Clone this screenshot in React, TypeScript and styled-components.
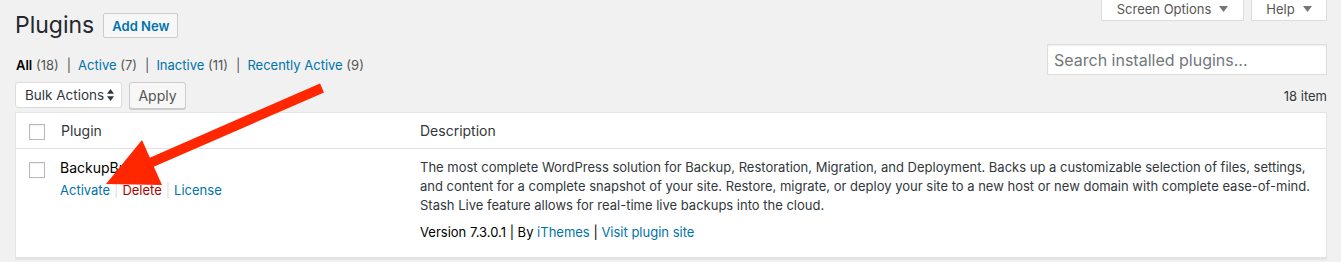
import React from "react";
import styled, { createGlobalStyle } from "styled-components";

const GlobalStyle = createGlobalStyle`
  html, body {
    margin: 0;
    padding: 0;
    background: #f1f1f1;
  }
  body {
    font-family: Inter, "Liberation Sans", Arial, sans-serif;
    font-size: 13px;
    color: #23282d;
  }
  * { box-sizing: border-box; }
`;

const filters = [
  { label: "All", count: 18, current: true },
  { label: "Active", count: 7 },
  { label: "Inactive", count: 11 },
  { label: "Recently Active", count: 9 },
];

const Triangle = () => (
  <svg width="9" height="6" viewBox="0 0 9 6">
    <path d="M0 0h9L4.5 6z" fill="#72777c" />
  </svg>
);

const SortArrows = () => (
  <svg width="7" height="12" viewBox="0 0 7 12">
    <path d="M3.5 0L7 4.8H0z M3.5 12L7 7.2H0z" fill="#32373c" />
  </svg>
);

const App = () => {
  return (
    <Page>
      <GlobalStyle />
      <TopBar>
        <TitleGroup>
          <Title>Plugins</Title>
          <AddNew>Add New</AddNew>
        </TitleGroup>
        <Tabs>
          <ScreenTab $width={143}>
            Screen Options <Triangle />
          </ScreenTab>
          <ScreenTab $width={76}>
            Help <Triangle />
          </ScreenTab>
        </Tabs>
      </TopBar>

      <FilterRow>
        <Filters>
          {filters.map((f, i) => (
            <li key={f.label}>
              {f.current ? <strong>{f.label}</strong> : <FilterLink>{f.label}</FilterLink>}
              <Count> ({f.count})</Count>
              {i < filters.length - 1 && <Sep>|</Sep>}
            </li>
          ))}
        </Filters>
        <Search placeholder="Search installed plugins..." />
      </FilterRow>

      <NavRow>
        <Actions>
          <Select>
            Bulk Actions <SortArrows />
          </Select>
          <Button>Apply</Button>
        </Actions>
        <ItemCount>18 item</ItemCount>
      </NavRow>

      <Table>
        <HeadRow>
          <CheckCell $top={11}>
            <Checkbox />
          </CheckCell>
          <HeadCell>Plugin</HeadCell>
          <HeadCell>Description</HeadCell>
        </HeadRow>
        <BodyRow>
          <CheckCell $top={13}>
            <Checkbox />
          </CheckCell>
          <TitleCell>
            <PluginName>BackupBuddy</PluginName>
            <RowActions>
              <ActionLink>Activate</ActionLink>
              <ActionSep>|</ActionSep>
              <ActionLink $danger>Delete</ActionLink>
              <ActionSep>|</ActionSep>
              <ActionLink>License</ActionLink>
            </RowActions>
          </TitleCell>
          <DescCell>
            <DescText>
              The most complete WordPress solution for Backup, Restoration, Migration, and Deployment. Backs up a customizable selection of files, settings,
              <br />
              and content for a complete snapshot of your site. Restore, migrate, or deploy your site to a new host or new domain with complete ease-of-mind.
              <br />
              Stash Live feature allows for real-time live backups into the cloud.
            </DescText>
            <Meta>
              Version 7.3.0.1 | By <MetaLink>iThemes</MetaLink> | <MetaLink>Visit plugin site</MetaLink>
            </Meta>
          </DescCell>
        </BodyRow>
      </Table>

      <Annotation width="1341" height="262" viewBox="0 0 1341 262">
        <line x1="322" y1="88" x2="150" y2="163" stroke="#ff2600" strokeWidth="10" />
        <polygon points="106,184 142,140 162,185" fill="#ff2600" />
      </Annotation>
    </Page>
  );
};

const Page = styled.div`
  position: relative;
  height: 262px;
  overflow: hidden;
  padding: 0 14px 0 15px;
`;

const TopBar = styled.div`
  display: flex;
  justify-content: space-between;
  align-items: flex-start;
`;

const TitleGroup = styled.div`
  display: flex;
  align-items: center;
  gap: 9px;
  margin-top: 13px;
`;

const Title = styled.h1`
  margin: 0;
  font-size: 23px;
  font-weight: 400;
  line-height: 25px;
  color: #23282d;
`;

const AddNew = styled.button`
  height: 25px;
  padding: 0 8px;
  border: 1px solid #ccc;
  border-radius: 2px;
  background: #f7f7f7;
  color: #0073aa;
  font-family: inherit;
  font-size: 13px;
  font-weight: 600;
`;

const Tabs = styled.div`
  display: flex;
  gap: 7px;
`;

const ScreenTab = styled.div<{ $width: number }>`
  width: ${(p) => p.$width}px;
  height: 21px;
  display: flex;
  align-items: center;
  justify-content: center;
  gap: 8px;
  padding-bottom: 3px;
  background: #fff;
  border: 1px solid #ddd;
  border-top: none;
  color: #555;
  font-size: 13px;
`;

const FilterRow = styled.div`
  display: flex;
  justify-content: space-between;
  align-items: flex-start;
  margin-top: 6px;
`;

const Filters = styled.ul`
  display: flex;
  margin: 11px 0 0 1px;
  padding: 0;
  list-style: none;
  line-height: 20px;
  color: #555;
  strong {
    color: #000;
    font-weight: 600;
  }
`;

const FilterLink = styled.span`
  color: #0073aa;
`;

const Count = styled.span`
  color: #555;
`;

const Sep = styled.span`
  display: inline-block;
  padding: 0 7px 0 8px;
  color: #555;
`;

const Search = styled.input`
  width: 280px;
  height: 31px;
  margin: 0;
  padding: 0 6px;
  border: 1px solid #ddd;
  box-shadow: inset 0 1px 2px rgba(0, 0, 0, 0.07);
  background: #fff;
  font-family: inherit;
  font-size: 16px;
  &::placeholder {
    color: #72777c;
  }
`;

const NavRow = styled.div`
  display: flex;
  justify-content: space-between;
  align-items: center;
  margin-top: 7px;
  height: 26px;
`;

const Actions = styled.div`
  display: flex;
  gap: 7px;
`;

const Select = styled.div`
  width: 107px;
  height: 26px;
  display: flex;
  align-items: center;
  justify-content: space-between;
  padding: 0 7px 0 9px;
  background: #fff;
  border: 1px solid #ddd;
  border-radius: 3px;
  font-size: 13.5px;
  white-space: nowrap;
  color: #32373c;
`;

const Button = styled.button`
  width: 57px;
  height: 27px;
  padding: 0;
  border: 1px solid #ccc;
  border-radius: 3px;
  background: #f7f7f7;
  box-shadow: 0 1px 0 #ccc;
  color: #555;
  font-family: inherit;
  font-size: 14px;
`;

const ItemCount = styled.div`
  color: #32373c;
  font-size: 13px;
  padding-top: 2px;
`;

const Table = styled.div`
  margin-top: 4px;
  background: #fff;
  border: 1px solid #e5e5e5;
  box-shadow: 0 1px 1px rgba(0, 0, 0, 0.04);
`;

const Row = styled.div`
  display: grid;
  grid-template-columns: 45px 349px 1fr;
  border-bottom: 1px solid #e1e1e1;
`;

const HeadRow = styled(Row)`
  height: 36px;
`;

const BodyRow = styled(Row)`
  height: 109px;
`;

const CheckCell = styled.div<{ $top: number }>`
  padding: ${(p) => p.$top}px 0 0 13px;
`;

const Checkbox = styled.span`
  display: block;
  width: 16px;
  height: 16px;
  border: 1px solid #b4b9be;
  background: #fff;
  box-shadow: inset 0 1px 2px rgba(0, 0, 0, 0.07);
`;

const HeadCell = styled.div`
  padding: 8px 0 0 0;
  line-height: 19px;
  font-size: 14px;
  color: #32373c;
  &:last-child {
    padding-left: 10px;
  }
`;

const TitleCell = styled.div`
  padding: 9px 0 0 0;
  margin-left: -1px;
  line-height: 19px;
`;

const PluginName = styled.div`
  font-size: 14px;
  color: #000;
`;

const RowActions = styled.div`
  margin-top: 4px;
  font-size: 13px;
  white-space: nowrap;
`;

const ActionLink = styled.span<{ $danger?: boolean }>`
  color: ${(p) => (p.$danger ? "#a00" : "#0073aa")};
`;

const ActionSep = styled.span`
  color: #ddd;
  padding: 0 4px;
`;

const DescCell = styled.div`
  padding: 9px 0 0 10px;
  line-height: 19px;
  font-size: 13px;
  white-space: nowrap;
`;

const DescText = styled.p`
  margin: 0;
  color: #32373c;
`;

const Meta = styled.p`
  margin: 8px 0 0;
  color: #000;
`;

const MetaLink = styled.span`
  color: #0073aa;
`;

const Annotation = styled.svg`
  position: absolute;
  left: 0;
  top: 0;
  pointer-events: none;
`;

export default App;
